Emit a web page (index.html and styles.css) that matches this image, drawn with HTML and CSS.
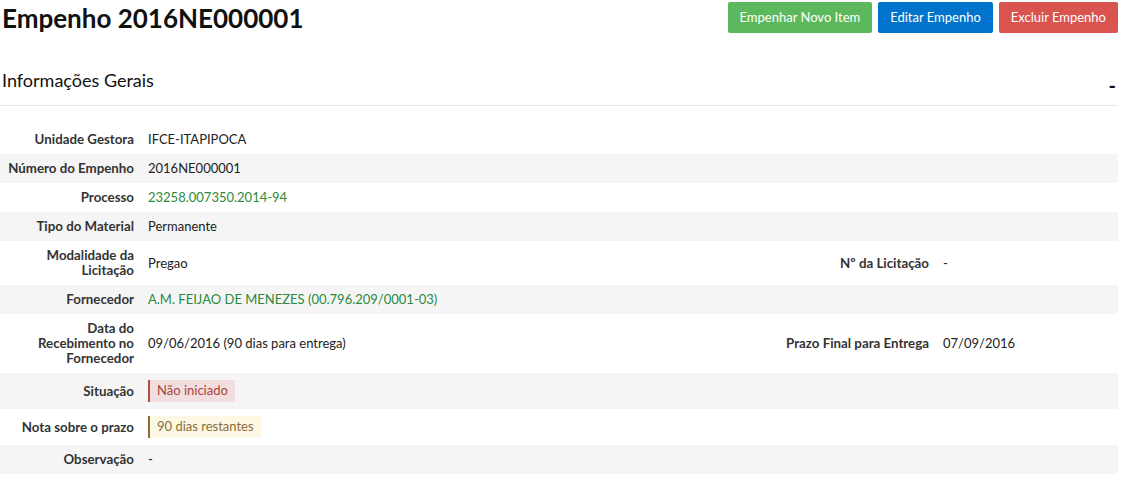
FILE: index.html
```html
<!DOCTYPE html>
<html lang="pt-BR">
<head>
    <meta charset="UTF-8">
    <title>Empenho 2016NE000001</title>
    <link rel="stylesheet" href="styles.css">
</head>
<body>
    <div class="page">
        <div class="page-header">
            <h1>Empenho 2016NE000001</h1>
            <div class="actions">
                <a href="#" class="btn btn-success">Empenhar Novo Item</a>
                <a href="#" class="btn btn-primary">Editar Empenho</a>
                <a href="#" class="btn btn-danger">Excluir Empenho</a>
            </div>
        </div>

        <div class="section-title">
            <h2>Informações Gerais</h2>
            <span class="toggle">-</span>
        </div>

        <table class="info">
            <colgroup>
                <col class="c-label">
                <col class="c-value">
                <col class="c-label2">
                <col class="c-value2">
            </colgroup>
            <tr>
                <th>Unidade Gestora</th>
                <td colspan="3">IFCE-ITAPIPOCA</td>
            </tr>
            <tr>
                <th>Número do Empenho</th>
                <td colspan="3">2016NE000001</td>
            </tr>
            <tr>
                <th>Processo</th>
                <td colspan="3"><a href="#">23258.007350.2014-94</a></td>
            </tr>
            <tr>
                <th>Tipo do Material</th>
                <td colspan="3">Permanente</td>
            </tr>
            <tr>
                <th>Modalidade da Licitação</th>
                <td>Pregao</td>
                <th>Nº da Licitação</th>
                <td>-</td>
            </tr>
            <tr>
                <th>Fornecedor</th>
                <td colspan="3"><a href="#">A.M. FEIJAO DE MENEZES (00.796.209/0001-03)</a></td>
            </tr>
            <tr>
                <th>Data do<br>Recebimento no<br>Fornecedor</th>
                <td>09/06/2016 (90 dias para entrega)</td>
                <th>Prazo Final para Entrega</th>
                <td>07/09/2016</td>
            </tr>
            <tr>
                <th>Situação</th>
                <td colspan="3"><span class="status status-error">Não iniciado</span></td>
            </tr>
            <tr>
                <th>Nota sobre o prazo</th>
                <td colspan="3"><span class="status status-alert">90 dias restantes</span></td>
            </tr>
            <tr>
                <th>Observação</th>
                <td colspan="3">-</td>
            </tr>
        </table>
    </div>
</body>
</html>
```

FILE: styles.css
```css
body {
    margin: 0;
    font-family: Lato, "Open Sans", sans-serif;
    color: #222;
    background: #fff;
}
.page {
    width: 1118px;
}
.page-header {
    display: flex;
    justify-content: space-between;
    align-items: flex-start;
    padding: 2px 0 0 2px;
}
.page-header h1 {
    margin: 0;
    font-size: 26px;
    font-weight: 700;
    line-height: 32px;
    color: #111;
}
.actions {
    display: flex;
    gap: 6px;
}
.btn {
    display: inline-block;
    height: 31px;
    line-height: 31px;
    padding: 0 12px;
    font-size: 13px;
    color: #fff;
    text-decoration: none;
    border-radius: 2px;
}
.btn-success {
    background: #5cb85c;
}
.btn-primary {
    background: #0073cc;
}
.btn-danger {
    background: #d9534f;
}
.section-title {
    display: flex;
    justify-content: space-between;
    align-items: center;
    margin-top: 31px;
    height: 40px;
    padding-left: 2px;
    border-bottom: 1px solid #e8e8e8;
}
.section-title h2 {
    margin: 0 0 10px;
    font-size: 18px;
    font-weight: 400;
    color: #111;
}
.toggle {
    font-size: 20px;
    font-weight: 700;
    color: #111;
    margin-right: 2px;
}
.info {
    margin-top: 19px;
    width: 100%;
    border-collapse: collapse;
    table-layout: fixed;
    font-size: 13px;
    line-height: 15px;
}
.c-label {
    width: 141px;
}
.c-label2 {
    width: 159px;
}
.c-value2 {
    width: 182px;
}
.info th,
.info td {
    padding: 7px 7px;
    vertical-align: middle;
}
.info th {
    text-align: right;
    font-weight: 700;
    font-size: 13.3px;
    color: #333;
}
.info td {
    text-align: left;
    color: #222;
}
.info tr:nth-child(even) {
    background: #f5f5f5;
}
.info a {
    color: #2c8a3c;
    text-decoration: none;
}
.status {
    display: inline-block;
    padding: 3px 7px 4px 7px;
    border-left: 2px solid;
}
.status-error {
    background: #f2dede;
    border-color: #b5484a;
    color: #a94442;
}
.status-alert {
    background: #fcf8e3;
    border-color: #8a6d3b;
    color: #8a6d3b;
}
```
